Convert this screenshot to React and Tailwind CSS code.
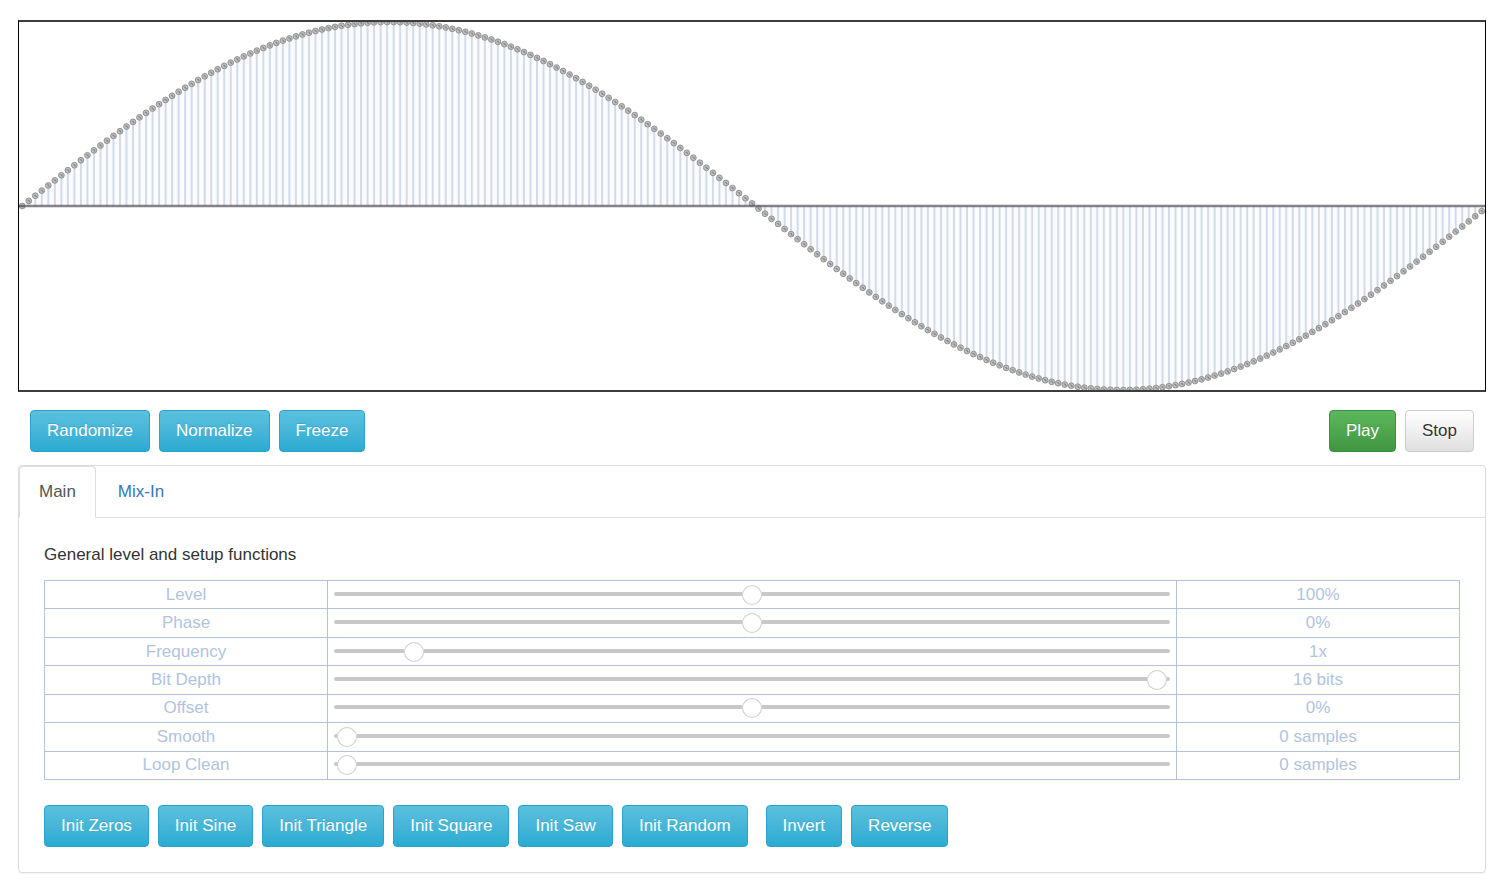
import React, { useState } from 'react';
import clsx from 'clsx';

const SAMPLES = 225;
const WIDTH = 1466;
const HEIGHT = 368;
const MID = HEIGHT / 2;
const STEP = WIDTH / SAMPLES;

const sine = Array.from({ length: SAMPLES }, (_, i) => ({
  x: STEP * (i + 0.5),
  y: MID - MID * Math.sin((2 * Math.PI * i) / SAMPLES)
}));

const buttonBase =
  'h-[42px] cursor-pointer whitespace-nowrap rounded border bg-linear-to-b px-4 hover:brightness-95';
const BTN = {
  info: `${buttonBase} border-[#28a4c9] from-[#5bc0de] to-[#2aabd2] text-white text-shadow-[0_-1px_0_rgba(0,0,0,0.1)]`,
  success: `${buttonBase} border-[#3e8f3e] from-[#5cb85c] to-[#419641] text-white text-shadow-[0_-1px_0_rgba(0,0,0,0.1)]`,
  plain: `${buttonBase} border-[#ccc] from-white to-[#e0e0e0] text-[#333] text-shadow-[0_1px_0_#fff]`
};

const CONTROLS = [
  { id: 'level', label: 'Level', min: 0, max: 200, value: 100, format: (v) => `${v}%` },
  { id: 'phase', label: 'Phase', min: -100, max: 100, value: 0, format: (v) => `${v}%` },
  { id: 'frequency', label: 'Frequency', min: 0, max: 12, value: 1, format: (v) => `${v}x` },
  { id: 'bitDepth', label: 'Bit Depth', min: 1, max: 16, value: 16, format: (v) => `${v} bits` },
  { id: 'offset', label: 'Offset', min: -100, max: 100, value: 0, format: (v) => `${v}%` },
  { id: 'smooth', label: 'Smooth', min: 0, max: 50, value: 0, format: (v) => `${v} samples` },
  { id: 'loopClean', label: 'Loop Clean', min: 0, max: 50, value: 0, format: (v) => `${v} samples` }
];

const INIT_BUTTONS = [
  'Init Zeros',
  'Init Sine',
  'Init Triangle',
  'Init Square',
  'Init Saw',
  'Init Random'
];

const Waveform = ({ samples }) => (
  <div className="border-x border-y-2 border-x-black border-y-[#3c3c3c]">
    <svg
      viewBox={`0 0 ${WIDTH} ${HEIGHT}`}
      className="block w-full"
      role="img"
      aria-label="Waveform"
    >
      {/* bars */}
      {samples.map((s, i) => (
        <g key={i}>
          <rect
            x={s.x - STEP / 2}
            y={Math.min(s.y, MID)}
            width={STEP}
            height={Math.abs(s.y - MID)}
            fill="#fafcff"
          />
          <line x1={s.x} y1={s.y} x2={s.x} y2={MID} stroke="#d3dbe9" strokeWidth="2" />
        </g>
      ))}
      {/* handles */}
      {samples.map((s, i) => (
        <g key={i}>
          <circle cx={s.x} cy={s.y} r="2.9" fill="#bebebe" stroke="#8c8c8c" strokeWidth="0.9" />
          <path
            d={`M${s.x - 1.2} ${s.y - 0.6}h1.6v1.4h1.2`}
            fill="none"
            stroke="#787878"
            strokeWidth="0.8"
          />
        </g>
      ))}
      <line x1="0" y1={MID} x2={WIDTH} y2={MID} stroke="#5c5a62" strokeOpacity="0.75" strokeWidth="2.6" />
    </svg>
  </div>
);

const Slider = ({ id, min, max, value, onChange }) => (
  <input
    id={id}
    type="range"
    min={min}
    max={max}
    value={value}
    onChange={(e) => onChange(Number(e.target.value))}
    className="mb-[2px] block h-1 w-full cursor-pointer appearance-none rounded-sm bg-[#c8c8c8] [&::-webkit-slider-runnable-track]:h-1 [&::-webkit-slider-thumb]:mt-[-10px] [&::-webkit-slider-thumb]:size-[26px] [&::-webkit-slider-thumb]:appearance-none [&::-webkit-slider-thumb]:rounded-full [&::-webkit-slider-thumb]:border-[3px] [&::-webkit-slider-thumb]:border-transparent [&::-webkit-slider-thumb]:bg-white [&::-webkit-slider-thumb]:bg-clip-padding [&::-webkit-slider-thumb]:shadow-[inset_0_0_0_1px_#cfcfcf]"
  />
);

export default function App() {
  const [tab, setTab] = useState('Main');
  const [values, setValues] = useState(() =>
    Object.fromEntries(CONTROLS.map((c) => [c.id, c.value]))
  );

  return (
    <main className="bg-white pt-5 pr-[14px] pb-[14px] pl-[18px] font-['Liberation_Sans',Arial,sans-serif] text-[17px] leading-6 text-[#333]">
      <Waveform samples={sine} />

      <div className="flex flex-wrap justify-between gap-[9px] px-3 pt-[18px] pb-[13px]">
        <div className="flex gap-[9px]">
          <button className={BTN.info}>Randomize</button>
          <button className={BTN.info}>Normalize</button>
          <button className={BTN.info}>Freeze</button>
        </div>
        <div className="flex gap-[9px]">
          <button className={BTN.success}>Play</button>
          <button className={BTN.plain}>Stop</button>
        </div>
      </div>

      <section className="rounded border border-[#ddd] shadow-[0_1px_2px_rgba(0,0,0,0.05)]">
        <div role="tablist" className="flex gap-[2px] border-b border-[#ddd]">
          {['Main', 'Mix-In'].map((name) => (
            <button
              key={name}
              role="tab"
              aria-selected={tab === name}
              onClick={() => setTab(name)}
              className={clsx(
                '-mb-px cursor-pointer rounded-t border px-[19px] py-[13px]',
                tab === name
                  ? 'border-[#ddd] border-b-white bg-white text-[#555]'
                  : 'border-transparent text-[#337ab7]'
              )}
            >
              {name}
            </button>
          ))}
        </div>

        <div className="p-[25px]">
          <p className="mb-[13px]">General level and setup functions</p>

          <table className="h-[200px] w-full table-fixed border-collapse text-center text-[#b0c4de]">
            <tbody>
              {CONTROLS.map((c) => (
                <tr key={c.id}>
                  <th className="w-1/5 border border-[#b0c4de] p-0 font-normal">
                    <label htmlFor={c.id}>{c.label}</label>
                  </th>
                  <td className="border border-[#b0c4de] px-[6px] py-0">
                    <Slider
                      id={c.id}
                      min={c.min}
                      max={c.max}
                      value={values[c.id]}
                      onChange={(v) => setValues((prev) => ({ ...prev, [c.id]: v }))}
                    />
                  </td>
                  <td className="w-1/5 border border-[#b0c4de] p-0">
                    {c.format(values[c.id])}
                  </td>
                </tr>
              ))}
            </tbody>
          </table>

          <div className="mt-[25px] flex flex-wrap gap-[18px]">
            <div className="flex flex-wrap gap-[9px]">
              {INIT_BUTTONS.map((name) => (
                <button key={name} className={BTN.info}>
                  {name}
                </button>
              ))}
            </div>
            <div className="flex gap-[9px]">
              <button className={BTN.info}>Invert</button>
              <button className={BTN.info}>Reverse</button>
            </div>
          </div>
        </div>
      </section>
    </main>
  );
}
